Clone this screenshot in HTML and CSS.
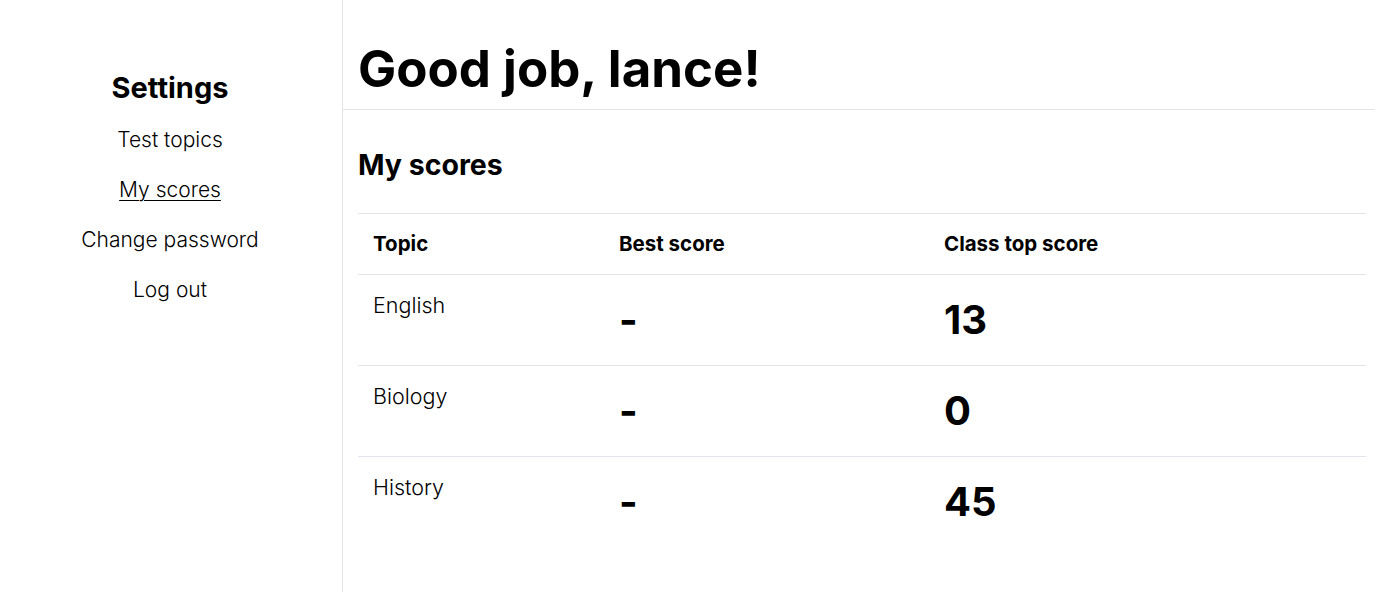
FILE: index.html
```html
<!DOCTYPE html>
<html lang="en">
<head>
<meta charset="utf-8">
<title>My scores</title>
<link rel="stylesheet" href="styles.css">
</head>
<body>
<div class="layout">
  <aside class="sidebar">
    <h2 class="sidebar-title">Settings</h2>
    <nav class="sidebar-nav">
      <a class="nav-link" href="#">Test topics</a>
      <a class="nav-link active" href="#">My scores</a>
      <a class="nav-link" href="#">Change password</a>
      <a class="nav-link" href="#">Log out</a>
    </nav>
  </aside>
  <main class="main">
    <header class="page-header">
      <h1 class="page-title">Good job, lance!</h1>
    </header>
    <section class="scores">
      <h2 class="section-title">My scores</h2>
      <table class="score-table">
        <thead>
          <tr>
            <th class="col-topic">Topic</th>
            <th class="col-best">Best score</th>
            <th class="col-top">Class top score</th>
          </tr>
        </thead>
        <tbody>
          <tr>
            <td class="topic">English</td>
            <td class="score">-</td>
            <td class="score">13</td>
          </tr>
          <tr>
            <td class="topic">Biology</td>
            <td class="score">-</td>
            <td class="score">0</td>
          </tr>
          <tr>
            <td class="topic">History</td>
            <td class="score">-</td>
            <td class="score">45</td>
          </tr>
        </tbody>
      </table>
    </section>
  </main>
</div>
</body>
</html>
```

FILE: styles.css
```css
* { box-sizing: border-box; }
html, body { margin: 0; padding: 0; }
body {
  font-family: "Inter", "Open Sans", "DejaVu Sans", sans-serif;
  color: #000;
  background: #fff;
}
.layout {
  display: flex;
  min-height: 100vh;
}
.sidebar {
  width: 343px;
  flex: 0 0 343px;
  border-right: 1px solid #e4e4ee;
  display: flex;
  flex-direction: column;
  align-items: center;
  padding: 70px 2px 0 0;
}
.sidebar-title {
  margin: 0 0 19px;
  font-size: 29px;
  font-weight: 700;
  line-height: 36px;
}
.sidebar-nav {
  display: flex;
  flex-direction: column;
  align-items: center;
  gap: 20px;
}
.nav-link {
  color: #000;
  text-decoration: none;
  font-size: 21px;
  font-weight: 300;
  line-height: 30px;
}
.nav-link.active { text-decoration: underline; text-underline-offset: 3px; text-decoration-thickness: 1px; }
.main {
  flex: 1;
  min-width: 0;
}
.page-header {
  height: 110px;
  border-bottom: 1px solid #e4e4ee;
  padding: 39px 15px 0;
}
.page-title {
  margin: 0;
  font-size: 51px;
  font-weight: 700;
  line-height: 60px;
}
.scores {
  padding: 37px 9px 0 15px;
}
.section-title {
  margin: 0 0 30px;
  font-size: 28.5px;
  font-weight: 700;
  line-height: 36px;
}
.score-table {
  width: 100%;
  border-collapse: collapse;
  table-layout: fixed;
}
.score-table th, .score-table td {
  text-align: left;
  padding: 15px;
}
.score-table th {
  font-size: 20.5px;
  font-weight: 700;
  line-height: 30px;
  border-top: 1px solid #e4e4ee;
  border-bottom: 1px solid #e4e4ee;
}
.col-topic { width: 246px; }
.col-best { width: 325px; }
.score-table tbody tr + tr td { border-top: 1px solid #e4e4ee; }
.score-table td { height: 91px; }
.topic {
  vertical-align: top;
  font-size: 21.5px;
  font-weight: 300;
  line-height: 30px;
}
.score {
  vertical-align: middle;
  font-size: 40px;
  font-weight: 700;
  line-height: 48px;
  padding-top: 14px !important;
}
```
